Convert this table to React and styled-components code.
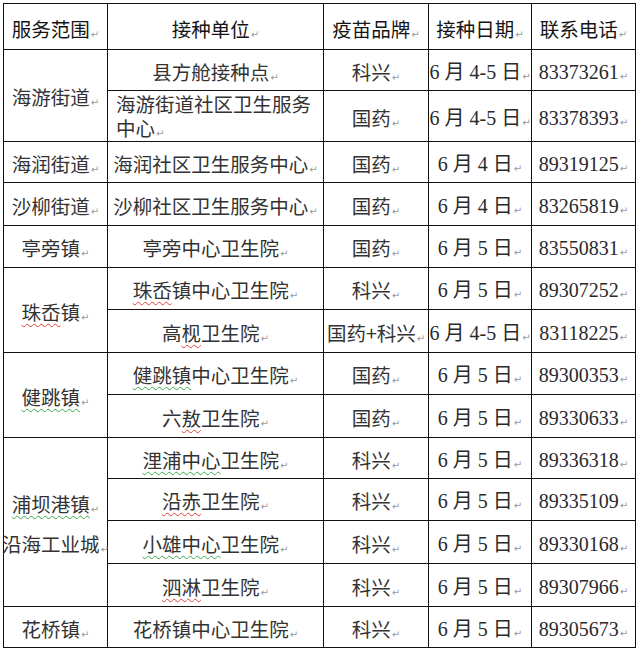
import React from 'react';
import styled, { createGlobalStyle } from 'styled-components';

const GlobalStyle = createGlobalStyle`
  html, body {
    margin: 0;
    padding: 0;
    background: #fff;
  }
  body {
    font-family: "Noto Sans CJK SC", sans-serif;
    color: #2a2a2a;
  }
`;

const COLS = [104, 216, 105, 103, 104];

const rows = [
  {
    area: ['海游街道'],
    height: [41, 51],
    items: [
      { unit: '县方舱接种点', brand: '科兴', date: '6 月 4-5 日', tel: '83373261' },
      { unit: ['海游街道社区卫生服务', '中心'], brand: '国药', date: '6 月 4-5 日', tel: '83378393', left: true },
    ],
  },
  {
    area: ['海润街道'],
    height: [41],
    items: [{ unit: '海润社区卫生服务中心', brand: '国药', date: '6 月 4 日', tel: '89319125' }],
  },
  {
    area: ['沙柳街道'],
    height: [43],
    items: [{ unit: '沙柳社区卫生服务中心', brand: '国药', date: '6 月 4 日', tel: '83265819' }],
  },
  {
    area: ['亭旁镇'],
    height: [42],
    items: [{ unit: '亭旁中心卫生院', brand: '国药', date: '6 月 5 日', tel: '83550831' }],
  },
  {
    area: [[{ t: '珠岙', err: 'red' }, '镇']],
    height: [42, 43],
    items: [
      { unit: [[{ t: '珠岙', err: 'red' }, '镇中心卫生院']], brand: '科兴', date: '6 月 5 日', tel: '89307252' },
      { unit: [['高', { t: '枧', err: 'red' }, '卫生院']], brand: '国药+科兴', date: '6 月 4-5 日', tel: '83118225' },
    ],
  },
  {
    area: [[{ t: '健跳镇', err: 'green' }]],
    height: [42, 43],
    items: [
      { unit: [[{ t: '健跳镇', err: 'green' }, '中心卫生院']], brand: '国药', date: '6 月 5 日', tel: '89300353' },
      { unit: [['六', { t: '敖', err: 'red' }, '卫生院']], brand: '国药', date: '6 月 5 日', tel: '89330633' },
    ],
  },
  {
    area: [[{ t: '浦坝港镇', err: 'green' }], '沿海工业城'],
    spread: true,
    height: [41, 42, 43, 43],
    items: [
      { unit: [[{ t: '浬浦中心', err: 'green' }, '卫生院']], brand: '科兴', date: '6 月 5 日', tel: '89336318' },
      { unit: [[{ t: '沿赤', err: 'red' }, '卫生院']], brand: '科兴', date: '6 月 5 日', tel: '89335109' },
      { unit: [[{ t: '小雄中心', err: 'green' }, '卫生院']], brand: '科兴', date: '6 月 5 日', tel: '89330168' },
      { unit: [[{ t: '泗淋', err: 'red' }, '卫生院']], brand: '科兴', date: '6 月 5 日', tel: '89307966' },
    ],
  },
  {
    area: ['花桥镇'],
    height: [41],
    items: [{ unit: '花桥镇中心卫生院', brand: '科兴', date: '6 月 5 日', tel: '89305673' }],
  },
];

// 一段文字，可能带拼写检查的波浪线
const renderPiece = (piece, i) => {
  if (typeof piece === 'string') return <React.Fragment key={i}>{piece}</React.Fragment>;
  return (
    <Spell key={i} $err={piece.err}>
      {piece.t}
    </Spell>
  );
};

const Para = ({ children }) => {
  const parts = Array.isArray(children) ? children : [children];
  return (
    <>
      {parts.map(renderPiece)}
      <Mark>↵</Mark>
    </>
  );
};

const Lines = ({ lines }) => {
  if (typeof lines === 'string') return <Para>{lines}</Para>;
  if (lines.length === 1) return <Para>{lines[0]}</Para>;
  // 多行但只有最后一行带段落标记
  return (
    <>
      {lines.slice(0, -1).map((l, i) => (
        <Line key={i}>{Array.isArray(l) ? l.map(renderPiece) : l}</Line>
      ))}
      <Line>
        <Para>{lines[lines.length - 1]}</Para>
      </Line>
    </>
  );
};

const App = () => {
  return (
    <Page>
      <GlobalStyle />
      <Table>
        <colgroup>
          {COLS.map((w, i) => (
            <col key={i} style={{ width: w }} />
          ))}
        </colgroup>
        <thead>
          <TR $h={46}>
            {['服务范围', '接种单位', '疫苗品牌', '接种日期', '联系电话'].map((h) => (
              <TH key={h}>
                <Para>{h}</Para>
              </TH>
            ))}
          </TR>
        </thead>
        <tbody>
          {rows.map((group, gi) =>
            group.items.map((item, ii) => (
              <TR key={`${gi}-${ii}`} $h={group.height[ii]}>
                {ii === 0 && (
                  <TD rowSpan={group.items.length}>
                    {group.spread ? (
                      <Stack>
                        {group.area.map((a, ai) => (
                          <div key={ai}>
                            <Para>{a}</Para>
                          </div>
                        ))}
                      </Stack>
                    ) : (
                      <Para>{group.area[0]}</Para>
                    )}
                  </TD>
                )}
                <TD $left={item.left}>
                  <Lines lines={item.unit} />
                </TD>
                <TD>
                  <Para>{item.brand}</Para>
                </TD>
                <NumTD>
                  <Para>{item.date}</Para>
                </NumTD>
                <NumTD>
                  <Para>{item.tel}</Para>
                </NumTD>
              </TR>
            ))
          )}
        </tbody>
      </Table>
    </Page>
  );
};

const Page = styled.div`
  padding: 3px 0 0 3px;
  width: 639px;
  height: 651px;
  box-sizing: border-box;
  overflow: hidden;
`;

const Table = styled.table`
  border-collapse: collapse;
  table-layout: fixed;
  width: 632px;
  border: 1.5px solid #111;
`;

const TR = styled.tr`
  height: ${(props) => props.$h}px;
`;

const TH = styled.th`
  border: 1.5px solid #111;
  padding: 5px 0 0;
  font-weight: 400;
  font-size: 19.5px;
  line-height: 1.2;
  color: #151515;
  text-align: center;
  vertical-align: middle;
`;

const TD = styled.td`
  border: 1.5px solid #111;
  padding: ${(props) => (props.$left ? '0 4px 0 8px' : '3px 0 0')};
  font-size: 19.5px;
  line-height: 1.2;
  text-align: ${(props) => (props.$left ? 'left' : 'center')};
  vertical-align: middle;
  white-space: nowrap;
  color: #333;
`;

const Line = styled.div`
  height: 24px;
  line-height: 24px;
`;

const NumTD = styled(TD)`
  font-family: "Liberation Serif", "Noto Sans CJK SC", serif;
  font-size: 20px;
  color: #2a2a2a;
`;

const Stack = styled.div`
  display: flex;
  flex-direction: column;
  align-items: center;
  gap: 16px;
`;

const Spell = styled.span`
  text-decoration: underline wavy ${(props) => (props.$err === 'red' ? '#e0403a' : '#3aa84a')};
  text-decoration-thickness: 1px;
  text-underline-offset: 3px;
`;

const Mark = styled.span`
  font-family: "DejaVu Sans", sans-serif;
  font-size: 10px;
  color: #9a9a9a;
  margin-left: 1px;
  vertical-align: -1px;
`;

export default App;
